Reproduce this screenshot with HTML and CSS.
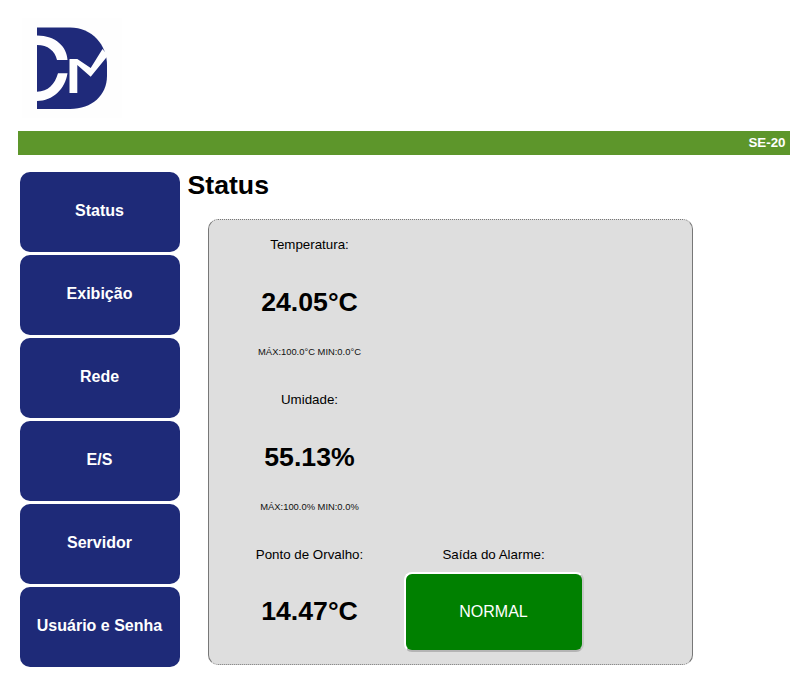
FILE: index.html
```html
<!DOCTYPE html>
<html lang="pt">
<head>
<meta charset="utf-8">
<title>Status</title>
<link rel="stylesheet" href="styles.css">
</head>
<body>
<header class="logo-row">
  <svg class="logo" viewBox="0 0 100 100" width="100" height="100" aria-label="DM">
    <rect width="100" height="100" fill="#fefefe"/>
    <path fill="#1f2a7a" d="M15 9.500H48C70 9.500 85 27 85 47V58C85 77 70 91 48 91H15Z"/>
    <path fill="#fefefe" d="M15 17.500C34 17.500 45 29 45.500 42H35C33 33 26 27 15 27ZM15 73.700C26 73.700 33 66 36 55.300H45.500C43 71 31 83 15 83ZM47.500 41H55.300L68.700 50L80.500 31L86 37.500L68.700 58.700L55.300 47V75H47.500Z"/>
  </svg>
</header>
<div class="top-bar">SE-20</div>
<div class="layout">
  <nav class="side-nav">
    <a class="nav-btn">Status</a>
    <a class="nav-btn">Exibição</a>
    <a class="nav-btn">Rede</a>
    <a class="nav-btn">E/S</a>
    <a class="nav-btn">Servidor</a>
    <a class="nav-btn">Usuário e Senha</a>
  </nav>
  <main class="content">
    <h1 class="title">Status</h1>
    <section class="panel">
      <div class="cell">
        <div class="label">Temperatura:</div>
        <div class="value">24.05°C</div>
        <div class="range">MÁX:100.0°C MIN:0.0°C</div>
      </div>
      <div class="cell"></div>
      <div class="cell">
        <div class="label">Umidade:</div>
        <div class="value">55.13%</div>
        <div class="range">MÁX:100.0% MIN:0.0%</div>
      </div>
      <div class="cell"></div>
      <div class="cell">
        <div class="label">Ponto de Orvalho:</div>
        <div class="value value-last">14.47°C</div>
      </div>
      <div class="cell cell-alarm">
        <div class="label">Saída do Alarme:</div>
        <div class="alarm">NORMAL</div>
      </div>
    </section>
  </main>
</div>
</body>
</html>
```

FILE: styles.css
```css
* { box-sizing: border-box; }
html, body { margin: 0; padding: 0; background: #fff; }
body {
  font-family: "Liberation Sans", Arial, sans-serif;
  color: #000;
  padding: 0 18px;
}
.logo-row { height: 131px; padding: 18px 0 0 4px; }
.logo { display: block; }
.top-bar {
  height: 24px;
  background: #5d962b;
  color: #fff;
  font-size: 13.33px;
  font-weight: bold;
  line-height: 24px;
  text-align: right;
  padding-right: 4.5px;
}
.layout { display: flex; padding: 17px 0 0 2px; }
.side-nav { width: 160px; flex: none; display: flex; flex-direction: column; gap: 3px; }
.nav-btn {
  height: 80px;
  padding: 0 1px 2px 0;
  display: flex;
  align-items: center;
  justify-content: center;
  background: #1e2a78;
  color: #fff;
  border-radius: 10px;
  font-size: 16px;
  font-weight: bold;
}
.content { padding-left: 8px; width: 513px; }
.title { margin: -1px 0 0 -0.5px; font-size: 26.67px; line-height: 28px; font-weight: bold; }
.panel {
  margin: 20px 0 0 20px;
  width: 485px;
  height: 446px;
  background: #dedede;
  border: 1px solid #777;
  border-top-style: dotted;
  border-bottom-style: dotted;
  border-radius: 10px;
  padding-left: 7px;
  display: grid;
  grid-template-columns: 187px 182px;
  grid-template-rows: 155px 155px 1fr;
}
.cell { display: flex; flex-direction: column; align-items: center; }
.cell-alarm .label { padding-right: 1px; }
.label { font-size: 13.33px; line-height: 15px; margin-top: 17px; height: 15px; white-space: nowrap; }
.value { font-size: 26.67px; font-weight: bold; line-height: 30px; margin-top: 35px; }
.value-last { margin-top: 34px; }
.range { font-size: 9.4px; line-height: 11px; margin-top: 29px; color: #111; white-space: nowrap; }
.alarm {
  width: 180px;
  height: 80px;
  flex: none;
  margin-top: 10px;
  background: #008000;
  color: #fff;
  border: 2px solid #fff;
  border-right-color: #c8c8c8;
  border-bottom-color: #b4b4b4;
  border-radius: 8px;
  font-size: 16px;
  padding: 0 1px 0 0;
  display: flex;
  align-items: center;
  justify-content: center;
}
```
